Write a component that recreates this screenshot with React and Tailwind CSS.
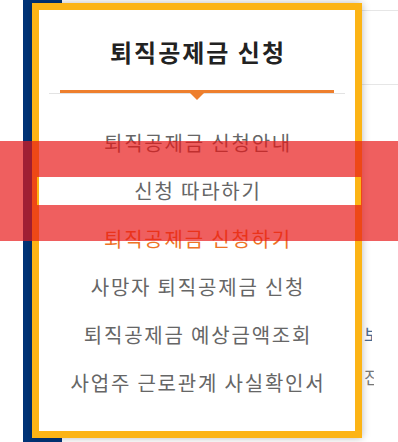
export default function App() {
  const items = [
    { t: "퇴직공제금 신청안내", c: "text-[#666666]" },
    { t: "신청 따라하기", c: "text-[#666666]" },
    { t: "퇴직공제금 신청하기", c: "text-[#ee7325]" },
    { t: "사망자 퇴직공제금 신청", c: "text-[#666666]" },
    { t: "퇴직공제금 예상금액조회", c: "text-[#666666]" },
    { t: "사업주 근로관계 사실확인서", c: "text-[#666666]" },
  ];
  const red = "absolute bg-[rgba(232,23,23,0.69)]";
  return (
    <div
      className="relative w-[398px] h-[442px] overflow-hidden bg-white"
      style={{ fontFamily: '"Noto Sans CJK KR", "Noto Sans", sans-serif' }}
    >
      {/* background page */}
      <div className="flex h-full">
        <div className="w-[23px]" />
        <div className="w-[39px] h-full bg-[#003478]" />
        <div className="flex-1 flex flex-col">
          <div className="h-[11px] border-b border-[#e6e6e6]" />
          <div className="h-[74px] border-b border-[#e6e6e6]" />
          <div className="flex-1 flex flex-col pl-[302px]">
            <div className="mt-[239px] w-[8px] text-[17px] leading-[20px] text-[#4b6a8f] overflow-hidden whitespace-nowrap">
              보
            </div>
            <div className="mt-[23px] w-[10px] text-[17px] leading-[20px] text-[#777] overflow-hidden whitespace-nowrap">
              진
            </div>
          </div>
        </div>
      </div>

      {/* dropdown panel */}
      <div className="absolute left-[32px] top-[3px] w-[330px] h-[435px] border-[7px] border-[#fcb415] bg-white shadow-[0_0_8px_rgba(0,0,0,0.28)] flex flex-col items-center">
        <div className="mt-[25px] text-[24px] leading-[34px] font-bold text-[#222] tracking-[2px] pl-[2px]">
          퇴직공제금 신청
        </div>
        <div className="relative mt-[21px] w-[296px] h-[4px] border-b border-[#e3e3e3] flex justify-center">
          <div className="w-[274px] h-[3px] bg-[#ee7f2d]" />
          <div className="absolute left-[141px] top-[3px] w-0 h-0 border-l-[7px] border-r-[7px] border-t-[7px] border-l-transparent border-r-transparent border-t-[#ee7f2d]" />
        </div>
        <div className="mt-[25px] flex flex-col w-full">
          {items.map((it) => (
            <div
              key={it.t}
              className={`h-[48px] flex items-center justify-center text-[20px] tracking-[1.8px] pl-[2px] ${it.c}`}
            >
              {it.t}
            </div>
          ))}
        </div>
      </div>

      {/* highlight overlay */}
      <div className={`${red} left-0 top-[141px] w-[398px] h-[36px]`} />
      <div className={`${red} left-0 top-[205px] w-[398px] h-[36px]`} />
      <div className={`${red} left-0 top-[177px] w-[37px] h-[28px]`} />
      <div className={`${red} left-[361px] top-[177px] w-[37px] h-[28px]`} />
    </div>
  );
}
